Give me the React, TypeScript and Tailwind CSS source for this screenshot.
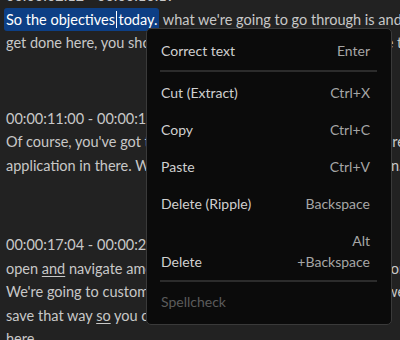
import React from 'react'

const font = { fontFamily: 'Lato, "Noto Sans", sans-serif' }

const Caption = ({ time, children, className }: { time: string; children: React.ReactNode; className?: string }) => {
  return (
    <div className={className}>
      <p className="whitespace-nowrap">{time}</p>
      {children}
    </div>
  )
}

const MenuRow = ({ label, keys, muted }: { label: string; keys?: string; muted?: boolean }) => {
  return (
    <div className="flex h-[37px] items-center justify-between pl-[14px] pr-[21px]">
      <span className={muted ? 'text-[#5b5b5b]' : 'text-[#d0d0d0]'}>{label}</span>
      {keys && <span className="text-[#a6a6a6]">{keys}</span>}
    </div>
  )
}

const App = () => {
  return (
    <div className="relative h-[340px] w-[400px] overflow-hidden bg-[#222222] text-[14px] text-[#c8c8c8]" style={font}>
      <div className="-mt-[16px] pl-[6px] text-[14.5px] leading-[23.5px]">
        <Caption time="00:00:02:12 - 00:00:10:19" className="mb-[52px]">
          <p className="whitespace-nowrap">
            <span className="-ml-[2px] rounded-[3px] bg-[#0d3f85] py-[3px] pl-[2px] pr-[2px] text-white">
              So the objectives<span className="mx-[1px] inline-block h-[17px] w-[1.5px] translate-y-[3px] bg-white" />today.
            </span>{' '}
            what we're going to go through is and what we're going to
          </p>
          <p className="whitespace-nowrap">get done here, you should be able to work through the whole thing.</p>
        </Caption>
        <Caption time="00:00:11:00 - 00:00:17:03" className="mb-[56px]">
          <p className="whitespace-nowrap">Of course, you've got to have the latest version of the software there to be</p>
          <p className="whitespace-nowrap">application in there. We will start with the basics and move on.</p>
        </Caption>
        <Caption time="00:00:17:04 - 00:00:28:10">
          <p className="whitespace-nowrap">
            open <span className="underline underline-offset-2">and</span> navigate among the panels and the workspace options
          </p>
          <p className="whitespace-nowrap">
            We're going to customize the workspace so it stays the way we <span className="underline underline-offset-2">go</span>
          </p>
          <p className="whitespace-nowrap">
            save that way <span className="underline underline-offset-2">so</span> you can come back to it every time, right
          </p>
          <p className="whitespace-nowrap">here.</p>
        </Caption>
      </div>

      <div className="absolute left-[146px] top-[28px] h-[297px] w-[246px] rounded-[5px] border border-[#3a3a3a] bg-[#0b0b0b] pt-[3px] text-[14px] leading-[21px]">
        <MenuRow label="Correct text" keys="Enter" />
        <div className="ml-[13px] mr-[14px] mt-[1px] h-[2px] bg-[#2c2c2c]" />
        <div className="mt-[2px]">
          <MenuRow label="Cut (Extract)" keys="Ctrl+X" />
          <MenuRow label="Copy" keys="Ctrl+C" />
          <MenuRow label="Paste" keys="Ctrl+V" />
          <MenuRow label="Delete (Ripple)" keys="Backspace" />
        </div>
        <div className="flex items-end justify-between pb-[7px] pl-[14px] pr-[21px] pt-[8px]">
          <span className="text-[#d0d0d0]">Delete</span>
          <span className="text-right text-[#a6a6a6]">
            Alt
            <br />
            +Backspace
          </span>
        </div>
        <div className="ml-[13px] mr-[14px] mt-[1px] h-[2px] bg-[#2c2c2c]" />
        <div className="mt-[1px]">
          <MenuRow label="Spellcheck" muted />
        </div>
      </div>
    </div>
  )
}

export default App
